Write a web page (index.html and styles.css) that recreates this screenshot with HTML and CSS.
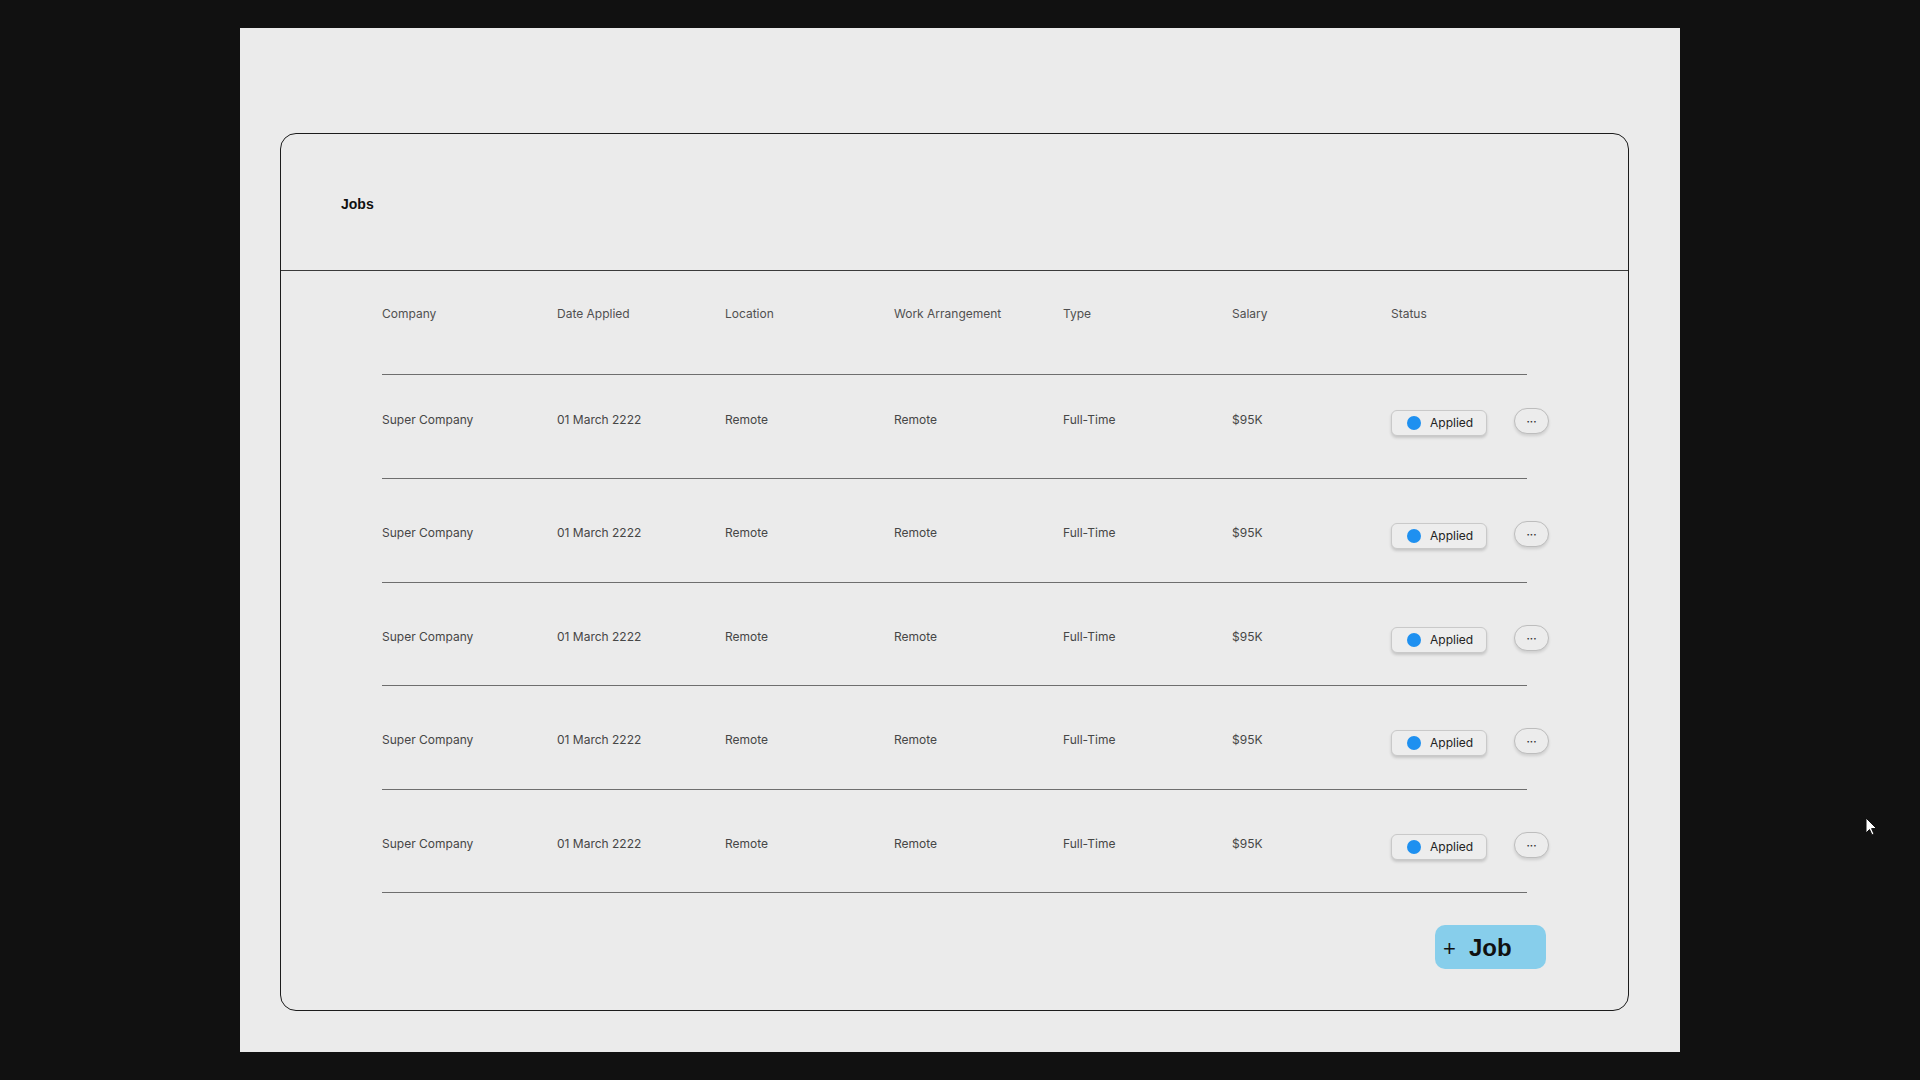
FILE: index.html
```html
<!DOCTYPE html>
<html lang="en">
<head>
<meta charset="utf-8">
<title>Jobs</title>
<link rel="stylesheet" href="styles.css">
</head>
<body>
<div class="frame">
  <div class="card">
    <div class="card-header"><h1 class="title">Jobs</h1></div>
    <div class="table">
      <div class="row head">
        <div>Company</div><div>Date Applied</div><div>Location</div><div>Work Arrangement</div><div>Type</div><div>Salary</div><div>Status</div>
      </div>
      <div class="row first">
        <div>Super Company</div><div>01 March 2222</div><div>Remote</div><div>Remote</div><div>Full-Time</div><div>$95K</div>
        <div class="status"><span class="badge"><span class="dot"></span>Applied</span><button class="more">···</button></div>
      </div>
      <div class="row">
        <div>Super Company</div><div>01 March 2222</div><div>Remote</div><div>Remote</div><div>Full-Time</div><div>$95K</div>
        <div class="status"><span class="badge"><span class="dot"></span>Applied</span><button class="more">···</button></div>
      </div>
      <div class="row">
        <div>Super Company</div><div>01 March 2222</div><div>Remote</div><div>Remote</div><div>Full-Time</div><div>$95K</div>
        <div class="status"><span class="badge"><span class="dot"></span>Applied</span><button class="more">···</button></div>
      </div>
      <div class="row">
        <div>Super Company</div><div>01 March 2222</div><div>Remote</div><div>Remote</div><div>Full-Time</div><div>$95K</div>
        <div class="status"><span class="badge"><span class="dot"></span>Applied</span><button class="more">···</button></div>
      </div>
      <div class="row">
        <div>Super Company</div><div>01 March 2222</div><div>Remote</div><div>Remote</div><div>Full-Time</div><div>$95K</div>
        <div class="status"><span class="badge"><span class="dot"></span>Applied</span><button class="more">···</button></div>
      </div>
      <div class="footer">
        <button class="add"><span class="plus">+</span><span class="add-label">Job</span></button>
      </div>
    </div>
  </div>
</div>
<svg class="cursor" width="14" height="20" viewBox="0 0 14 20"><path d="M1 1 L1 16 L4.5 12.5 L7 18 L9 17 L6.6 11.6 L11.5 11.5 Z" fill="#fff" stroke="#111" stroke-width="1"/></svg>
</body>
</html>
```

FILE: styles.css
```css
html, body {
  margin: 0;
  padding: 0;
}
body {
  background: #111111;
  font-family: Inter, "Noto Sans", sans-serif;
  width: 1920px;
  height: 1080px;
  overflow: hidden;
  position: relative;
}
.frame {
  margin: 28px 0 0 240px;
  width: 1440px;
  height: 1024px;
  background: #ebebeb;
  padding: 105px 0 0 40px;
  box-sizing: border-box;
}
.card {
  width: 1349px;
  height: 878px;
  border: 1px solid #1c1c1c;
  border-radius: 16px;
  box-sizing: border-box;
}
.card-header {
  height: 137px;
  box-sizing: border-box;
  border-bottom: 1px solid #3a3a3a;
  display: flex;
  align-items: center;
  padding-left: 60px;
}
.title {
  margin: 0;
  font-family: "Liberation Sans", Arial, sans-serif;
  font-weight: bold;
  font-size: 14px;
  color: #111;
  padding-top: 4px;
}
.table {
  margin-left: 101px;
  width: 1145px;
}
.row {
  display: grid;
  grid-template-columns: 175px 168px 169px 169px 169px 159px 1fr;
  align-items: start;
  box-sizing: border-box;
  height: 103.5px;
  padding-top: 46px;
  border-bottom: 1px solid #6e6e6e;
  font-size: 12px;
  line-height: 16px;
  color: #464646;
}
.row.head {
  height: 104px;
  padding-top: 35px;
  color: #505050;
}
.row.first {
  height: 104px;
  padding-top: 37px;
}
.status {
  display: flex;
  align-items: flex-start;
  gap: 27px;
}
.badge {
  display: inline-flex;
  align-items: center;
  box-sizing: border-box;
  width: 96px;
  height: 26px;
  margin-top: -2px;
  padding-left: 15px;
  border: 1px solid #c9c9c9;
  border-radius: 6px;
  background: #ededed;
  box-shadow: 0 2px 3px rgba(0, 0, 0, 0.16);
  color: #222;
  font-size: 12px;
}
.dot {
  width: 14px;
  height: 14px;
  border-radius: 50%;
  background: #1e90f0;
  margin-right: 9px;
  flex: none;
}
.more {
  box-sizing: border-box;
  width: 35px;
  height: 26px;
  margin-top: -4px;
  border: 1px solid #bdbdbd;
  border-radius: 13px;
  background: #ececec;
  box-shadow: 0 2px 3px rgba(0, 0, 0, 0.12);
  font-family: Inter, sans-serif;
  font-size: 10px;
  font-weight: bold;
  color: #333;
  padding: 0;
  line-height: 24px;
}
.footer {
  display: flex;
  justify-content: flex-end;
  margin-right: -19px;
  padding-top: 32px;
}
.add {
  box-sizing: border-box;
  width: 111px;
  height: 44px;
  border: none;
  border-radius: 10px;
  background: #87ceeb;
  display: flex;
  align-items: center;
  padding: 2px 0 0 8px;
  font-family: "Liberation Sans", Arial, sans-serif;
  color: #111;
}
.plus {
  font-size: 22px;
  width: 26px;
  text-align: left;
  margin-top: 2px;
}
.add-label {
  font-size: 24px;
  font-weight: bold;
}
.cursor {
  position: absolute;
  left: 1865px;
  top: 817px;
}
```
